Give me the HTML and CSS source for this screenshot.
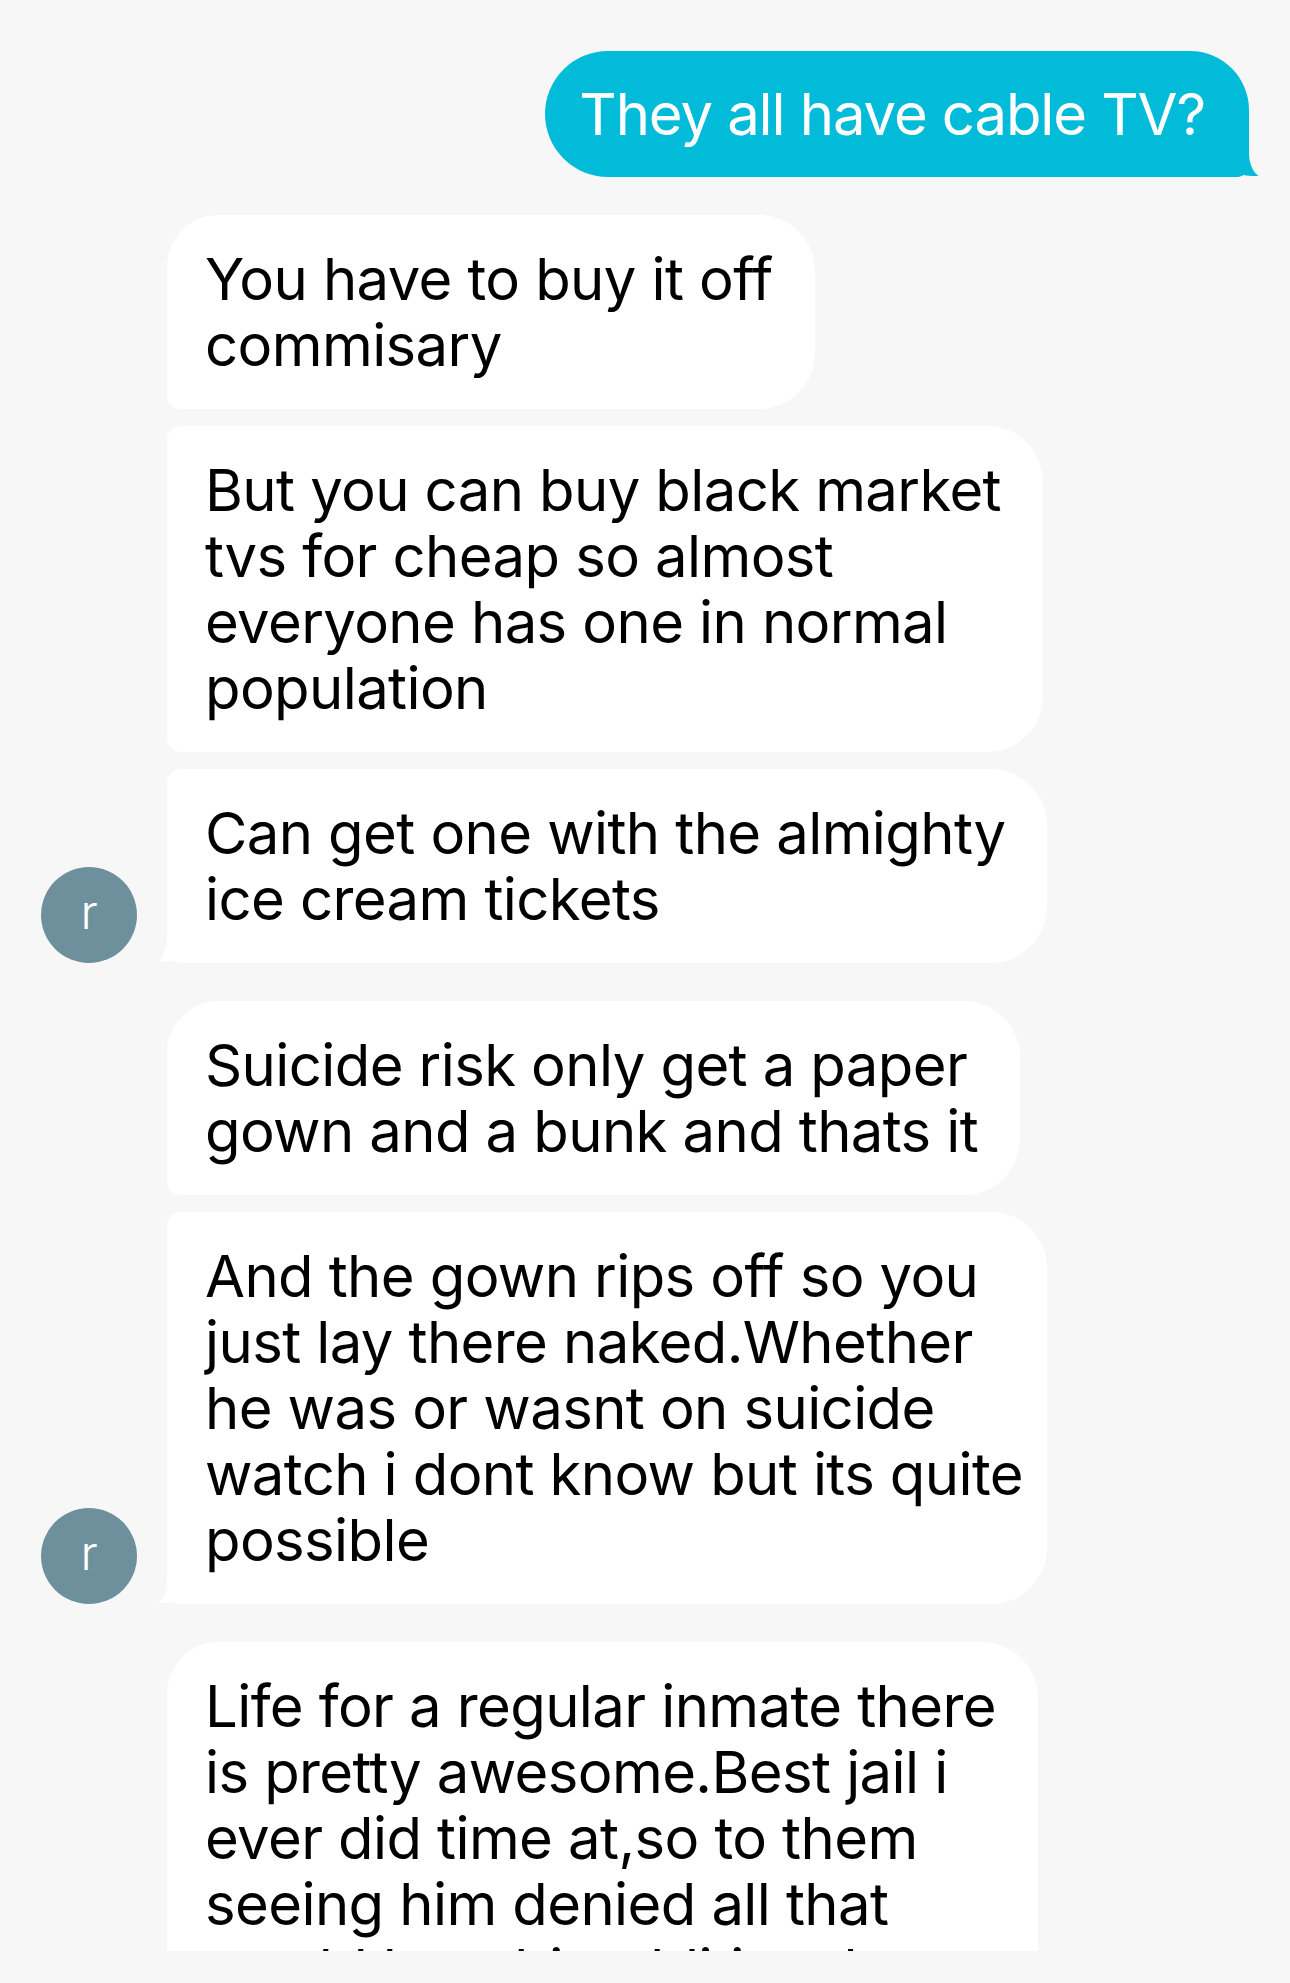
FILE: index.html
```html
<!DOCTYPE html>
<html lang="en">
<head>
<meta charset="utf-8">
<title>Messages</title>
<link rel="stylesheet" href="styles.css">
</head>
<body>
<main class="chat">
  <div class="row-out">
    <div class="bubble out">They all have cable TV?</div>
  </div>

  <div class="group">
    <div class="avatar-col"><div class="avatar">r</div></div>
    <div class="stack">
      <div class="bubble in first">You have to buy it off<br>commisary</div>
      <div class="bubble in mid">But you can buy black market<br>tvs for cheap so almost<br>everyone has one in normal<br>population</div>
      <div class="bubble in last">Can get one with the almighty<br>ice cream tickets</div>
    </div>
  </div>

  <div class="group">
    <div class="avatar-col"><div class="avatar">r</div></div>
    <div class="stack">
      <div class="bubble in first">Suicide risk only get a paper<br>gown and a bunk and thats it</div>
      <div class="bubble in last">And the gown rips off so you<br>just lay there naked.Whether<br>he was or wasnt on suicide<br>watch i dont know but its quite<br>possible</div>
    </div>
  </div>

  <div class="group">
    <div class="avatar-col"></div>
    <div class="stack">
      <div class="bubble in first">Life for a regular inmate there<br>is pretty awesome.Best jail i<br>ever did time at,so to them<br>seeing him denied all that<br>would be a bit additional</div>
    </div>
  </div>
</main>
</body>
</html>
```

FILE: styles.css
```css
html, body {
  margin: 0;
  padding: 0;
  background: #f7f7f7;
}

body {
  width: 1290px;
  height: 1983px;
  overflow: hidden;
  font-family: "Inter", "Noto Sans", sans-serif;
  -webkit-font-smoothing: antialiased;
}

.chat {
  height: 1951px;
  overflow: hidden;
  padding-top: 51px;
  box-sizing: border-box;
  display: flex;
  flex-direction: column;
  gap: 38px;
}

.row-out {
  display: flex;
  justify-content: flex-end;
  padding-right: 41px;
}

.group {
  display: flex;
  align-items: flex-end;
  padding-left: 41px;
  gap: 30px;
}

.avatar-col {
  width: 96px;
  flex: none;
  position: relative;
  z-index: 2;
}

.avatar {
  width: 96px;
  height: 96px;
  border-radius: 50%;
  background: #6e909c;
  color: #ffffff;
  display: flex;
  align-items: center;
  justify-content: center;
  font-size: 48px;
  font-weight: 300;
  line-height: 1;
  padding-bottom: 6px;
  box-sizing: border-box;
}

.stack {
  display: flex;
  flex-direction: column;
  align-items: flex-start;
  gap: 17px;
}

.bubble {
  position: relative;
  font-size: 58px;
  line-height: 66px;
  letter-spacing: -0.6px;
  padding: 31px 42px 31px 38px;
  white-space: nowrap;
  box-sizing: border-box;
  max-width: 880px;
}

.out {
  background: #02bbd8;
  color: #ffffff;
  border-radius: 64px 60px 12px 64px;
  padding: 30px 44px 30px 34px;
  letter-spacing: -1.1px;
}

.out::before {
  content: "";
  position: absolute;
  right: -13px;
  bottom: 1px;
  width: 40px;
  height: 40px;
  background: #02bbd8;
  border-bottom-left-radius: 30px 26px;
  border-bottom-right-radius: 5px;
}

.out::after {
  content: "";
  position: absolute;
  right: -40px;
  bottom: 0;
  width: 40px;
  height: 44px;
  background: #f7f7f7;
  border-bottom-left-radius: 14px 24px;
}

.in {
  background: #ffffff;
  color: #000000;
  border-radius: 14px 56px 56px 14px;
}

.in.first {
  border-top-left-radius: 52px;
}

.in.last::before {
  content: "";
  position: absolute;
  left: -14px;
  bottom: 1px;
  width: 40px;
  height: 40px;
  background: #ffffff;
  border-bottom-right-radius: 30px 26px;
  border-bottom-left-radius: 5px;
}

.in.last::after {
  content: "";
  position: absolute;
  left: -28px;
  bottom: 0;
  width: 28px;
  height: 44px;
  background: #f7f7f7;
  border-bottom-right-radius: 14px 24px;
}
```
